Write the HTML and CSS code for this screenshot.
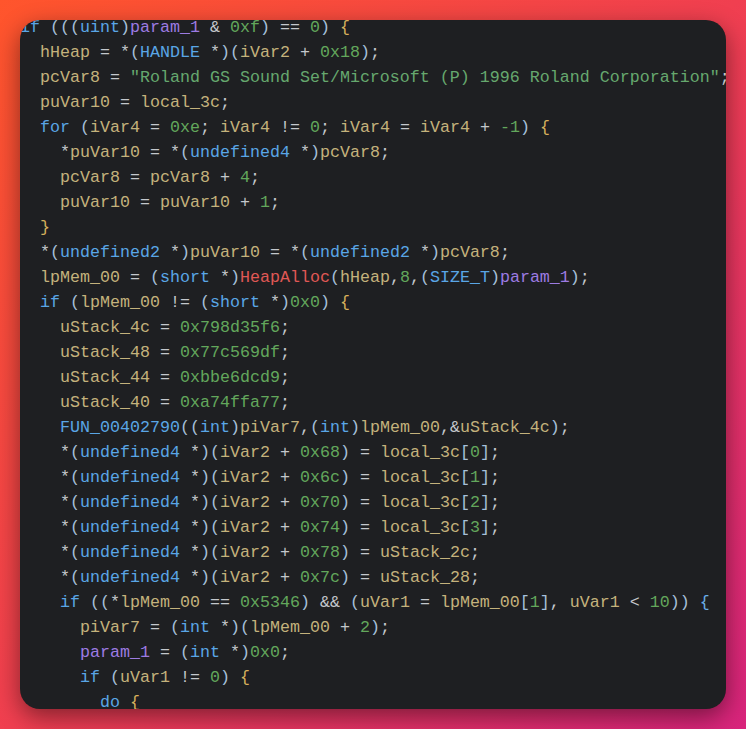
FILE: index.html
```html
<!DOCTYPE html>
<html lang="en">
<head>
<meta charset="utf-8">
<title>Decompiled code</title>
<link rel="stylesheet" href="styles.css">
</head>
<body>
<main class="card">
<pre class="code"><span class="k">if</span> <span class="pa">(((</span><span class="k">uint</span><span class="pa">)</span><span class="p">param_1</span> &amp; <span class="n">0xf</span><span class="pa">)</span> == <span class="n">0</span><span class="pa">)</span> <span class="b">{</span>
  <span class="v">hHeap</span> = *<span class="pa">(</span><span class="k">HANDLE</span> *<span class="pa">)(</span><span class="v">iVar2</span> + <span class="n">0x18</span><span class="pa">)</span>;
  <span class="v">pcVar8</span> = <span class="s">"Roland GS Sound Set/Microsoft (P) 1996 Roland Corporation"</span>;
  <span class="v">puVar10</span> = <span class="v">local_3c</span>;
  <span class="k">for</span> <span class="pa">(</span><span class="v">iVar4</span> = <span class="n">0xe</span>; <span class="v">iVar4</span> != <span class="n">0</span>; <span class="v">iVar4</span> = <span class="v">iVar4</span> + <span class="n">-1</span><span class="pa">)</span> <span class="b">{</span>
    *<span class="v">puVar10</span> = *<span class="pa">(</span><span class="k">undefined4</span> *<span class="pa">)</span><span class="v">pcVar8</span>;
    <span class="v">pcVar8</span> = <span class="v">pcVar8</span> + <span class="n">4</span>;
    <span class="v">puVar10</span> = <span class="v">puVar10</span> + <span class="n">1</span>;
  <span class="b">}</span>
  *<span class="pa">(</span><span class="k">undefined2</span> *<span class="pa">)</span><span class="v">puVar10</span> = *<span class="pa">(</span><span class="k">undefined2</span> *<span class="pa">)</span><span class="v">pcVar8</span>;
  <span class="v">lpMem_00</span> = <span class="pa">(</span><span class="k">short</span> *<span class="pa">)</span><span class="f">HeapAlloc</span><span class="pa">(</span><span class="v">hHeap</span>,<span class="n">8</span>,<span class="pa">(</span><span class="k">SIZE_T</span><span class="pa">)</span><span class="p">param_1</span><span class="pa">)</span>;
  <span class="k">if</span> <span class="pa">(</span><span class="v">lpMem_00</span> != <span class="pa">(</span><span class="k">short</span> *<span class="pa">)</span><span class="n">0x0</span><span class="pa">)</span> <span class="b">{</span>
    <span class="v">uStack_4c</span> = <span class="n">0x798d35f6</span>;
    <span class="v">uStack_48</span> = <span class="n">0x77c569df</span>;
    <span class="v">uStack_44</span> = <span class="n">0xbbe6dcd9</span>;
    <span class="v">uStack_40</span> = <span class="n">0xa74ffa77</span>;
    <span class="k">FUN_00402790</span><span class="pa">((</span><span class="k">int</span><span class="pa">)</span><span class="v">piVar7</span>,<span class="pa">(</span><span class="k">int</span><span class="pa">)</span><span class="v">lpMem_00</span>,&amp;<span class="v">uStack_4c</span><span class="pa">)</span>;
    *<span class="pa">(</span><span class="k">undefined4</span> *<span class="pa">)(</span><span class="v">iVar2</span> + <span class="n">0x68</span><span class="pa">)</span> = <span class="v">local_3c</span><span class="pa">[</span><span class="n">0</span><span class="pa">]</span>;
    *<span class="pa">(</span><span class="k">undefined4</span> *<span class="pa">)(</span><span class="v">iVar2</span> + <span class="n">0x6c</span><span class="pa">)</span> = <span class="v">local_3c</span><span class="pa">[</span><span class="n">1</span><span class="pa">]</span>;
    *<span class="pa">(</span><span class="k">undefined4</span> *<span class="pa">)(</span><span class="v">iVar2</span> + <span class="n">0x70</span><span class="pa">)</span> = <span class="v">local_3c</span><span class="pa">[</span><span class="n">2</span><span class="pa">]</span>;
    *<span class="pa">(</span><span class="k">undefined4</span> *<span class="pa">)(</span><span class="v">iVar2</span> + <span class="n">0x74</span><span class="pa">)</span> = <span class="v">local_3c</span><span class="pa">[</span><span class="n">3</span><span class="pa">]</span>;
    *<span class="pa">(</span><span class="k">undefined4</span> *<span class="pa">)(</span><span class="v">iVar2</span> + <span class="n">0x78</span><span class="pa">)</span> = <span class="v">uStack_2c</span>;
    *<span class="pa">(</span><span class="k">undefined4</span> *<span class="pa">)(</span><span class="v">iVar2</span> + <span class="n">0x7c</span><span class="pa">)</span> = <span class="v">uStack_28</span>;
    <span class="k">if</span> <span class="pa">((</span>*<span class="v">lpMem_00</span> == <span class="n">0x5346</span><span class="pa">)</span> &amp;&amp; <span class="pa">(</span><span class="v">uVar1</span> = <span class="v">lpMem_00</span><span class="pa">[</span><span class="n">1</span><span class="pa">]</span>, <span class="v">uVar1</span> &lt; <span class="n">10</span><span class="pa">))</span> <span class="b2">{</span>
      <span class="v">piVar7</span> = <span class="pa">(</span><span class="k">int</span> *<span class="pa">)(</span><span class="v">lpMem_00</span> + <span class="n">2</span><span class="pa">)</span>;
      <span class="p">param_1</span> = <span class="pa">(</span><span class="k">int</span> *<span class="pa">)</span><span class="n">0x0</span>;
      <span class="k">if</span> <span class="pa">(</span><span class="v">uVar1</span> != <span class="n">0</span><span class="pa">)</span> <span class="b">{</span>
        <span class="k">do</span> <span class="b">{</span></pre>
</main>
</body>
</html>
```
FILE: styles.css
```css
html, body {
  margin: 0;
  padding: 0;
}

body {
  width: 746px;
  height: 729px;
  box-sizing: border-box;
  padding: 20px;
  background: linear-gradient(135deg, #ff552c 0%, #f03f50 50%, #d8247c 100%);
  overflow: hidden;
}

.card {
  width: 706px;
  height: 689px;
  background: #1e1f22;
  border-radius: 20px;
  overflow: hidden;
  box-shadow: 0 8px 24px rgba(0, 0, 0, 0.45);
}

.code {
  margin: -5px 0 0 0;
  padding: 0;
  font-family: "Courier New", "Liberation Mono", monospace;
  font-size: 16.67px;
  line-height: 25px;
  color: #c4c7cc;
  white-space: pre;
}

.v { color: #c4b27c; }
.k { color: #5aa6e6; }
.n { color: #63a75c; }
.s { color: #66a86e; }
.p { color: #9d7be2; }
.f { color: #e05855; }
.pa { color: #a6c0da; }
.b { color: #d6b05c; }
.b2 { color: #6aaee6; }
```
